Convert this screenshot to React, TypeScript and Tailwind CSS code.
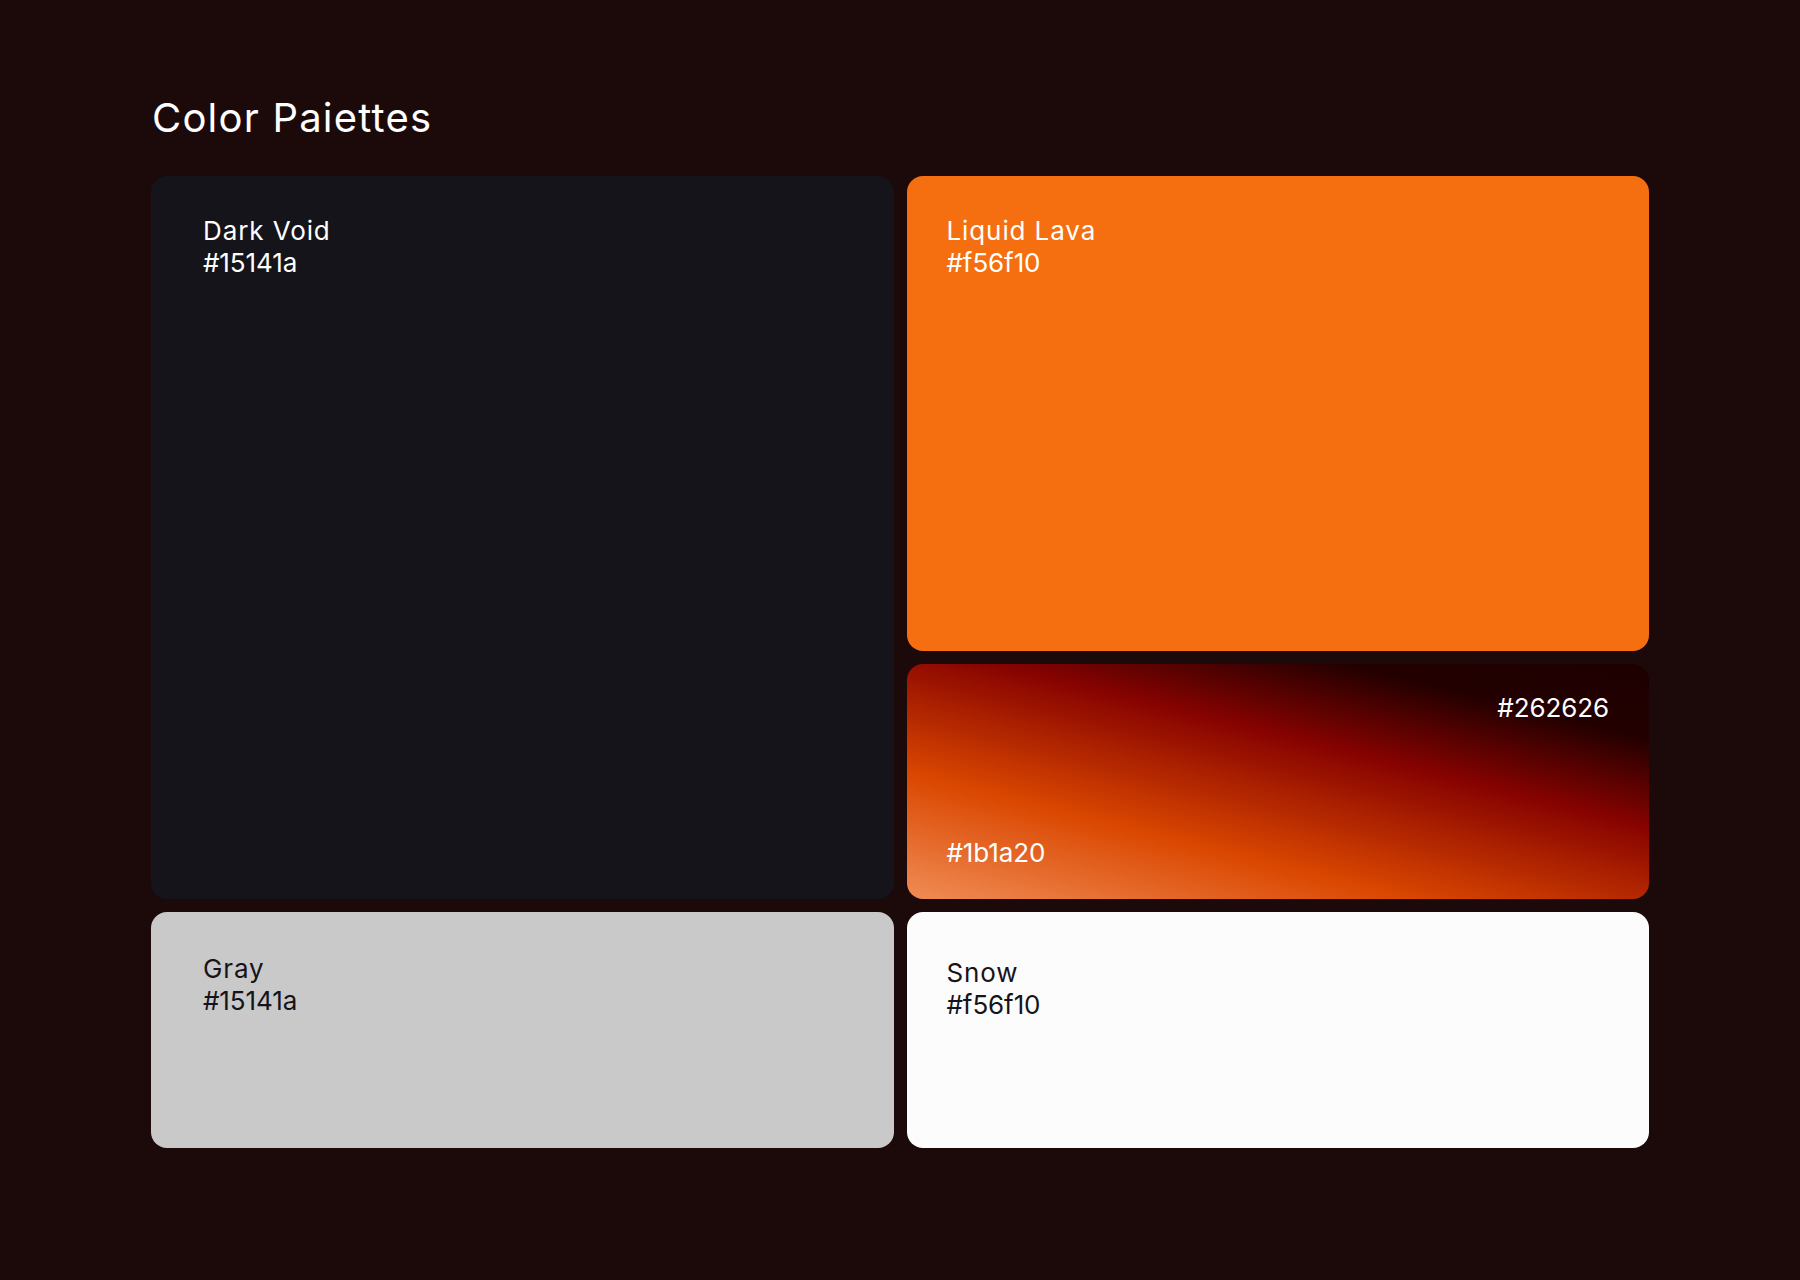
type Swatch = {
  name?: string;
  hex: string;
};

function Label({ name, hex }: Swatch) {
  return (
    <div className="text-[26px] leading-[32px]">
      {name && <p className="tracking-[0.9px]">{name}</p>}
      <p className="tracking-[-0.1px]">{hex}</p>
    </div>
  );
}

export default function App() {
  return (
    <div className="min-h-screen bg-[#1c0a0a] font-['Inter','Open_Sans',sans-serif]">
      <div className="pl-[151px] pt-[94px]">
        <h1 className="ml-px text-[40px] leading-[48px] tracking-[1.2px] font-normal text-white">
          Color Paiettes
        </h1>

        <div className="mt-[34px] grid w-[1498px] grid-cols-2 grid-rows-[475px_235px_236px] gap-[13px]">
          {/* dark void spans the first two rows */}
          <div className="row-span-2 rounded-2xl bg-[#15141a] pl-[52px] pt-[39px] text-white">
            <Label name="Dark Void" hex="#15141a" />
          </div>

          <div className="rounded-2xl bg-[#f56f10] pl-[40px] pt-[39px] text-white">
            <Label name="Liquid Lava" hex="#f56f10" />
          </div>

          <div className="flex flex-col justify-between rounded-2xl bg-[linear-gradient(14deg,#f08c55_0%,#da4700_30%,#870300_61%,#230000_82%,#1e0000_100%)] pb-[30px] pl-[40px] pr-[40px] pt-[28px] text-white">
            <div className="self-end">
              <Label hex="#262626" />
            </div>
            <Label hex="#1b1a20" />
          </div>

          <div className="rounded-2xl bg-[#c9c9c9] pl-[52px] pt-[41px] text-[#15141a]">
            <Label name="Gray" hex="#15141a" />
          </div>

          <div className="rounded-2xl bg-[#fcfcfc] pl-[40px] pt-[45px] text-[#15141a]">
            <Label name="Snow" hex="#f56f10" />
          </div>
        </div>
      </div>
    </div>
  );
}
